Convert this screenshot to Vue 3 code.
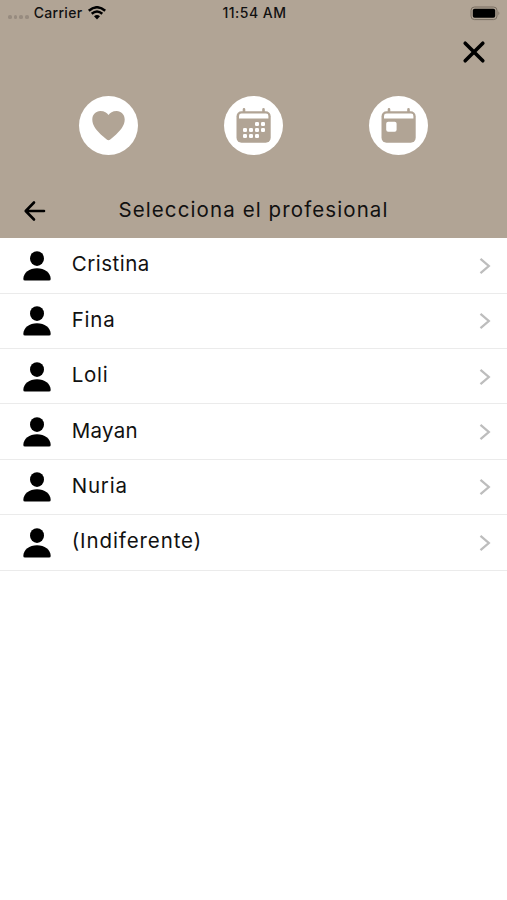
<template>
  <div class="screen">
    <header class="header">
      <div class="status-bar">
        <div class="carrier">
          <span class="signal"><i v-for="n in 4" :key="n"></i></span>
          <span class="carrier-name">Carrier</span>
          <svg class="wifi" width="20" height="14" viewBox="0 0 20 14">
            <path d="M1.8 4.8Q10-2.3 18.2 4.8" />
            <path d="M4.7 7.8Q10 3.3 15.3 7.8" />
            <path class="dot" d="M7 10.2Q10 7.8 13 10.2L10 13.4Z" />
          </svg>
        </div>
        <span class="time">11:54 AM</span>
        <svg class="battery" width="31" height="15" viewBox="0 0 31 15">
          <rect x="1" y="1" width="26" height="12.6" rx="3.5" fill="none" stroke="#786d61" />
          <rect x="2.8" y="2.8" width="22.4" height="9" rx="1.8" fill="#000" />
          <path d="M28.3 5.2Q30.5 7.3 28.3 9.3Z" fill="#85796d" />
        </svg>
      </div>

      <div class="close-row">
        <button type="button" aria-label="Cerrar">
          <svg width="24" height="24" viewBox="0 0 24 24">
            <path d="M3.2 3.2L20.8 20.8M20.8 3.2L3.2 20.8" fill="none" stroke="#000" stroke-width="3.6" stroke-linecap="round" />
          </svg>
        </button>
      </div>

      <nav class="modes">
        <button v-for="mode in modes" :key="mode" type="button" class="mode" :aria-label="mode">
          <svg v-if="mode === 'Favoritos'" width="59" height="59" viewBox="0 0 59 59">
            <path d="M29.5 44.2C28.4 44.2 26.8 42.8 24.2 40.5C17.7 34.6 13.3 29.5 13.3 23.4C13.3 18.5 16.8 14.9 21.3 14.9C25.4 14.9 28.1 16.8 29.5 19C30.9 16.8 33.6 14.9 37.7 14.9C42.2 14.9 45.7 18.5 45.7 23.4C45.7 29.5 41.3 34.6 34.8 40.5C32.2 42.8 30.6 44.2 29.5 44.2Z" fill="#b1a495" />
          </svg>
          <svg v-else width="59" height="59" viewBox="0 0 59 59">
            <path d="M20 17V13.4M39.5 17V13.4" stroke="#b1a495" stroke-width="2.6" stroke-linecap="round" />
            <rect x="12.5" y="15.2" width="34.2" height="31.6" rx="5" fill="#b1a495" />
            <path d="M15 22.4V20Q15 17.6 17.5 17.6H42Q44.4 17.6 44.4 20V22.4Z" fill="#fff" />
            <template v-if="mode === 'Calendario'">
              <rect v-for="(dot, i) in dots" :key="i" :x="dot[0]" :y="dot[1]" width="4" height="4" rx="1.3" fill="#fff" />
            </template>
            <rect v-else x="17.2" y="25.8" width="10.4" height="10" rx="2" fill="#fff" />
          </svg>
        </button>
      </nav>

      <div class="title-row">
        <button type="button" class="back" aria-label="Volver">
          <svg width="24" height="22" viewBox="0 0 24 22">
            <path d="M21 11H3M11 2.5L2.7 11L11 19.5" fill="none" stroke="#000" stroke-width="2.6" stroke-linecap="round" stroke-linejoin="round" />
          </svg>
        </button>
        <h1>Selecciona el profesional</h1>
      </div>
    </header>

    <ul class="list">
      <li v-for="item in profesionales" :key="item.nombre" @click="seleccionado = item.nombre">
        <svg class="person" width="28" height="30" viewBox="0 0 28 30">
          <ellipse cx="14" cy="7.6" rx="7" ry="7.4" />
          <path d="M2 29.6Q.3 29.6 .3 28C.3 21.7 6.5 17.2 14 17.2S27.7 21.7 27.7 28Q27.7 29.6 26 29.6Z" />
        </svg>
        <span class="name" :style="{ letterSpacing: item.espacio + 'px' }">{{ item.nombre }}</span>
        <svg class="chevron" width="12" height="18" viewBox="0 0 12 18">
          <path d="M1.5 1.8L9.8 9L1.5 16.2" fill="none" stroke="#bdbdbd" stroke-width="2.3" />
        </svg>
      </li>
    </ul>
  </div>
</template>

<script setup>
import { ref } from 'vue'

const modes = ['Favoritos', 'Calendario', 'Hoy']

// Días marcados en el icono del calendario
const dots = [
  [31, 26], [37, 26],
  [19, 32], [25, 32], [31, 32], [37, 32],
  [19, 38], [25, 38], [31, 38]
]

const seleccionado = ref(null)

const profesionales = [
  { nombre: 'Cristina', espacio: 0.5 },
  { nombre: 'Fina', espacio: 0.8 },
  { nombre: 'Loli', espacio: 0.7 },
  { nombre: 'Mayan', espacio: 0.3 },
  { nombre: 'Nuria', espacio: 0.8 },
  { nombre: '(Indiferente)', espacio: 0.9 }
]
</script>

<style>
body { background: #fff; }
</style>

<style scoped>
.screen { width: 100%; height: 900px; overflow: hidden; background: #fff; color: #111; font-family: Inter, "Liberation Sans", sans-serif; }
button { border: none; background: none; padding: 0; display: block; cursor: pointer; }
svg { display: block; }

.header { height: 238.2px; background: #b1a495; }

.status-bar { height: 26px; padding: 0 6px 0 8px; display: grid; grid-template-columns: 1fr auto 1fr; align-items: center; font-size: 14px; font-weight: 500; box-sizing: border-box; }
.carrier { display: flex; align-items: center; }
.signal { display: flex; gap: 2px; margin: 8px 4px 0 0; }
.signal i { width: 3.7px; height: 3.7px; border-radius: 50%; background: #978b7f; }
.carrier-name { letter-spacing: 0.3px; margin: -2px 0 0 1px; }
.wifi { margin-left: 5px; }
.wifi path { fill: none; stroke: #000; stroke-width: 2.5; }
.wifi .dot { fill: #000; stroke: none; }
.time { letter-spacing: 0.5px; margin-top: -2px; }
.battery { justify-self: end; }

.close-row { display: flex; justify-content: flex-end; align-items: flex-start; padding: 14px 21px 0 0; height: 70px; box-sizing: border-box; }

.modes { display: flex; justify-content: space-between; padding: 0 79px; }
.mode { width: 59px; height: 59px; border-radius: 50%; background: #fff; }

.title-row { display: grid; grid-template-columns: 96px 1fr 96px; align-items: center; height: 30px; margin-top: 40px; }
.back { margin-left: 23px; padding-top: 2px; }
.title-row h1 { margin: -2px 0 0; font-size: 20.5px; font-weight: 400; letter-spacing: 1.1px; text-align: center; white-space: nowrap; }

.list { list-style: none; margin: 0; padding: 0; }
.list li { display: flex; align-items: center; height: 55.4px; box-sizing: border-box; padding: 0 16px 0 23px; border-bottom: 1.4px solid #ebebeb; cursor: pointer; }
.person { margin-top: 1px; fill: #000; }
.name { flex: 1; margin: -2px 0 0 20.7px; font-size: 20.5px; line-height: 28px; }
.chevron { margin-top: 1px; }
</style>
